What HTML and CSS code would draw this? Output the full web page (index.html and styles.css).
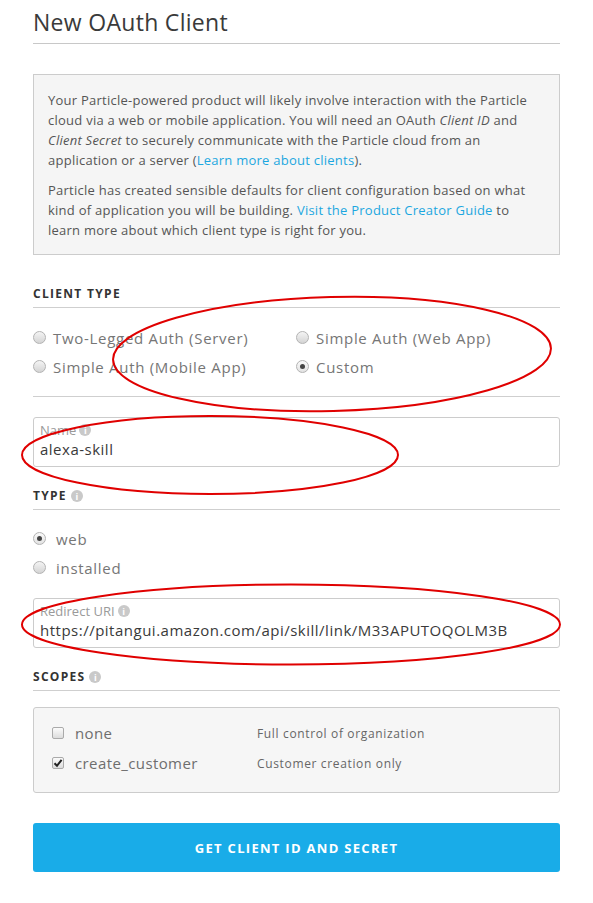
FILE: index.html
```html
<!DOCTYPE html>
<html>
<head>
<meta charset="utf-8">
<link rel="stylesheet" href="styles.css">
</head>
<body>
<div class="page">
  <h1 class="title">New OAuth Client</h1>

  <div class="info">
    <p>Your Particle-powered product will likely involve interaction with the Particle cloud via a web or mobile application. You will need an OAuth <em>Client ID</em> and <em>Client Secret</em> to securely communicate with the Particle cloud from an application or a server (<a href="#">Learn more about clients</a>).</p>
    <p>Particle has created sensible defaults for client configuration based on what kind of application you will be building. <a href="#">Visit the Product Creator Guide</a> to learn more about which client type is right for you.</p>
  </div>

  <h2 class="section">CLIENT TYPE</h2>
  <div class="radio-grid">
    <div class="radio-row"><span class="radio"></span><span class="rlabel">Two-Legged Auth (Server)</span></div>
    <div class="radio-row"><span class="radio"></span><span class="rlabel">Simple Auth (Web App)</span></div>
    <div class="radio-row"><span class="radio"></span><span class="rlabel">Simple Auth (Mobile App)</span></div>
    <div class="radio-row"><span class="radio checked"></span><span class="rlabel">Custom</span></div>
  </div>
  <div class="sep"></div>

  <div class="field">
    <div class="flabel">Name <span class="info-i">i</span></div>
    <div class="fvalue">alexa-skill</div>
  </div>

  <h2 class="section">TYPE <span class="info-i">i</span></h2>
  <div class="radio-list">
    <div class="radio-row"><span class="radio checked"></span><span class="rlabel">web</span></div>
    <div class="radio-row"><span class="radio"></span><span class="rlabel">installed</span></div>
  </div>

  <div class="field field-uri">
    <div class="flabel">Redirect URI <span class="info-i">i</span></div>
    <div class="fvalue">https://pitangui.amazon.com/api/skill/link/M33APUTOQOLM3B</div>
  </div>

  <h2 class="section">SCOPES <span class="info-i">i</span></h2>
  <div class="scopes">
    <div class="scope-row"><span class="check"></span><span class="sname">none</span><span class="sdesc">Full control of organization</span></div>
    <div class="scope-row"><span class="check checked"><svg viewBox="0 0 10 10" width="10" height="10"><path d="M1.5 5.2 L4 7.8 L8.6 1.8" fill="none" stroke="#222" stroke-width="2"/></svg></span><span class="sname">create_customer</span><span class="sdesc">Customer creation only</span></div>
  </div>

  <button class="submit">GET CLIENT ID AND SECRET</button>

  <svg class="marks" width="593" height="903" viewBox="0 0 593 903">
    <ellipse cx="332" cy="354" rx="219" ry="57" transform="rotate(-1.5 332 354)" fill="none" stroke="#e00000" stroke-width="2"/>
    <ellipse cx="210" cy="455" rx="188" ry="39" fill="none" stroke="#e00000" stroke-width="2"/>
    <ellipse cx="291" cy="624.5" rx="269" ry="40" fill="none" stroke="#e00000" stroke-width="2"/>
  </svg>
</div>
</body>
</html>
```

FILE: styles.css
```css
* { box-sizing: border-box; }
html, body { margin: 0; padding: 0; background: #fff; }
body { font-family: "Open Sans", "Liberation Sans", sans-serif; color: #555; }
.page { position: relative; width: 593px; padding: 0 33px 30px 33px; }

.title {
  margin: 0;
  padding: 8px 0 7px;
  font-size: 23px;
  line-height: 28px;
  font-weight: 400;
  letter-spacing: 0.3px;
  color: #3a3a3a;
  border-bottom: 1px solid #c8c8c8;
}

.info {
  margin-top: 30px;
  background: #f5f5f5;
  border: 1px solid #cccccc;
  padding: 15px 24px 14px 14px;
  font-size: 13px;
  line-height: 20px;
  letter-spacing: 0.25px;
  color: #555;
}
.info p { margin: 0; }
.info p + p { margin-top: 10px; }
.info a { color: #1ca7e0; text-decoration: none; }

.section {
  margin: 31px 0 0;
  padding-bottom: 5px;
  font-size: 12px;
  line-height: 16px;
  font-weight: 700;
  letter-spacing: 1.3px;
  color: #333;
  border-bottom: 1px solid #cfcfcf;
  display: flex;
  align-items: center;
  gap: 4px;
}

.info-i {
  display: inline-flex;
  align-items: center;
  justify-content: center;
  width: 12px;
  height: 12px;
  border-radius: 50%;
  background: #c9c9c9;
  color: #fff;
  font-size: 9px;
  font-weight: 700;
  line-height: 1;
  letter-spacing: 0;
}

.radio-grid {
  margin-top: 15px;
  display: grid;
  grid-template-columns: 263px 1fr;
  grid-auto-rows: 29px;
}
.radio-list {
  margin-top: 14px;
  display: grid;
  grid-auto-rows: 29px;
}
.radio-list .radio { margin-right: 10px; }
.radio-row { display: flex; align-items: center; }
.radio {
  width: 13px;
  height: 13px;
  border-radius: 50%;
  border: 1px solid #b3b3b3;
  background: linear-gradient(#f4f4f4, #d4d4d4);
  margin-right: 7px;
  display: flex;
  align-items: center;
  justify-content: center;
  flex: none;
}
.radio.checked { background: linear-gradient(#fafafa, #e2e2e2); }
.radio.checked::after {
  content: "";
  width: 5px;
  height: 5px;
  border-radius: 50%;
  background: #444;
}
.rlabel { font-size: 15px; color: #767676; letter-spacing: 0.7px; }

.sep { margin-top: 15px; border-top: 1px solid #cfcfcf; }

.field {
  margin-top: 20px;
  height: 50px;
  border: 1px solid #cccccc;
  border-radius: 3px;
  padding: 4px 6px 0;
}
.flabel {
  font-size: 13px;
  line-height: 16px;
  color: #9a9a9a;
  display: flex;
  align-items: center;
  gap: 3px;
}
.fvalue { font-size: 15px; line-height: 22px; color: #3a3a3a; letter-spacing: 0.5px; }
.field-uri { margin-top: 16px; }

.field + .section { margin-top: 21px; }

.scopes {
  margin-top: 16px;
  background: #f6f6f6;
  border: 1px solid #cccccc;
  border-radius: 3px;
  padding: 10px 18px 14px;
}
.scope-row { display: flex; align-items: center; height: 30px; }
.check {
  width: 12px;
  height: 12px;
  border: 1px solid #aaaaaa;
  border-radius: 2px;
  background: linear-gradient(#fbfbfb, #dcdcdc);
  display: flex;
  align-items: center;
  justify-content: center;
  flex: none;
}
.sname { width: 193px; padding-left: 11px; font-size: 15px; color: #6e6e6e; letter-spacing: 0.4px; }
.sdesc { font-size: 12px; color: #666; letter-spacing: 0.65px; }

.submit {
  display: block;
  width: 100%;
  margin-top: 30px;
  height: 49px;
  border: none;
  border-radius: 3px;
  background: #19ace8;
  color: #fff;
  font-family: "Open Sans", "Liberation Sans", sans-serif;
  font-size: 13px;
  font-weight: 700;
  letter-spacing: 1.3px;
}

.marks { position: absolute; left: 0; top: 0; pointer-events: none; }
```
